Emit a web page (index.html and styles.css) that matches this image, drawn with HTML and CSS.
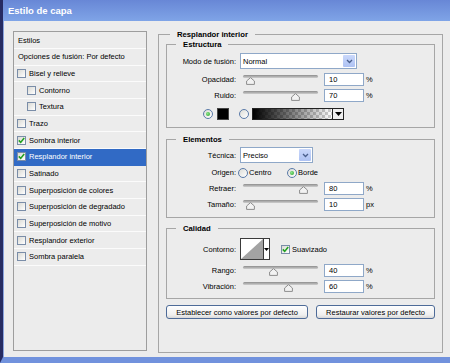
FILE: index.html
```html
<!DOCTYPE html>
<html lang="es">
  <head>
    <meta charset="UTF-8" />
    <meta name="viewport" content="width=device-width, initial-scale=1.0" />
    <title>Estilo de capa</title>
    <link rel="stylesheet" href="styles.css">
  </head>

  <body>
    <div class="window">
      <div class="titlebar">Estilo de capa</div>

      <div class="content">
        <ul class="styles-list">
          <li class="list-head first">Estilos</li>
          <li class="list-head">Opciones de fusión: Por defecto</li>
          <li><span class="check"></span>Bisel y relieve</li>
          <li class="sub"><span class="check"></span>Contorno</li>
          <li class="sub"><span class="check"></span>Textura</li>
          <li><span class="check"></span>Trazo</li>
          <li>
            <span class="check"><svg width="7" height="7" viewBox="0 0 7 7"><path d="M0.8 3.4 L2.7 5.4 L6.2 1" fill="none" stroke="#21a121" stroke-width="1.6"/></svg></span>Sombra interior
          </li>
          <li class="selected">
            <span class="check"><svg width="7" height="7" viewBox="0 0 7 7"><path d="M0.8 3.4 L2.7 5.4 L6.2 1" fill="none" stroke="#21a121" stroke-width="1.6"/></svg></span>Resplandor interior
          </li>
          <li><span class="check"></span>Satinado</li>
          <li><span class="check"></span>Superposición de colores</li>
          <li><span class="check"></span>Superposición de degradado</li>
          <li><span class="check"></span>Superposición de motivo</li>
          <li><span class="check"></span>Resplandor exterior</li>
          <li><span class="check"></span>Sombra paralela</li>
        </ul>

        <fieldset class="group outer">
          <legend>Resplandor interior</legend>

          <fieldset class="group estructura">
            <legend>Estructura</legend>
            <div class="row row-select">
              <span class="label">Modo de fusión:</span>
              <div class="select select-wide">
                <span class="select-text">Normal</span>
                <span class="select-btn"><svg width="7" height="5" viewBox="0 0 7 5"><path d="M1 1 L3.5 3.5 L6 1" fill="none" stroke="#4a5f8c" stroke-width="1.3"/></svg></span>
              </div>
            </div>
            <div class="row gap4">
              <span class="label">Opacidad:</span>
              <div class="slider">
                <div class="track"></div>
                <svg class="thumb" style="left: 10%" width="9" height="8" viewBox="0 0 9 8"><path d="M4.5 0.6 L8.4 4 V7.4 H0.6 V4 Z" fill="#f2f2f2" stroke="#8c8c8c"/></svg>
              </div>
              <div class="field">10</div>
              <span class="unit">%</span>
            </div>
            <div class="row gap3">
              <span class="label">Ruido:</span>
              <div class="slider">
                <div class="track"></div>
                <svg class="thumb" style="left: 70%" width="9" height="8" viewBox="0 0 9 8"><path d="M4.5 0.6 L8.4 4 V7.4 H0.6 V4 Z" fill="#f2f2f2" stroke="#8c8c8c"/></svg>
              </div>
              <div class="field">70</div>
              <span class="unit">%</span>
            </div>
            <div class="row row-color gap6">
              <span class="radio on"></span>
              <span class="swatch"></span>
              <span class="radio radio-gap"></span>
              <div class="gradient">
                <span class="gradient-fill"></span>
                <span class="gradient-btn"><svg width="7" height="4" viewBox="0 0 7 4"><path d="M0 0 H7 L3.5 4 Z" fill="#000"/></svg></span>
              </div>
            </div>
          </fieldset>

          <fieldset class="group elementos">
            <legend>Elementos</legend>
            <div class="row row-select">
              <span class="label">Técnica:</span>
              <div class="select select-short">
                <span class="select-text">Preciso</span>
                <span class="select-btn"><svg width="7" height="5" viewBox="0 0 7 5"><path d="M1 1 L3.5 3.5 L6 1" fill="none" stroke="#4a5f8c" stroke-width="1.3"/></svg></span>
              </div>
            </div>
            <div class="row row-origin gap4">
              <span class="label">Origen:</span>
              <span class="option option-first"><span class="radio"></span>Centro</span>
              <span class="option"><span class="radio on"></span>Borde</span>
            </div>
            <div class="row gap4">
              <span class="label">Retraer:</span>
              <div class="slider">
                <div class="track"></div>
                <svg class="thumb" style="left: 80%" width="9" height="8" viewBox="0 0 9 8"><path d="M4.5 0.6 L8.4 4 V7.4 H0.6 V4 Z" fill="#f2f2f2" stroke="#8c8c8c"/></svg>
              </div>
              <div class="field">80</div>
              <span class="unit">%</span>
            </div>
            <div class="row gap3">
              <span class="label">Tamaño:</span>
              <div class="slider">
                <div class="track"></div>
                <svg class="thumb" style="left: 10%" width="9" height="8" viewBox="0 0 9 8"><path d="M4.5 0.6 L8.4 4 V7.4 H0.6 V4 Z" fill="#f2f2f2" stroke="#8c8c8c"/></svg>
              </div>
              <div class="field">10</div>
              <span class="unit">px</span>
            </div>
          </fieldset>

          <fieldset class="group calidad">
            <legend>Calidad</legend>
            <div class="row row-contour">
              <span class="label">Contorno:</span>
              <div class="contour">
                <svg class="contour-preview" width="22" height="20" viewBox="0 0 22 20"><polygon points="0,20 22,0 22,20" fill="#a3a3a3"/></svg>
                <span class="contour-btn"><svg width="5" height="3" viewBox="0 0 5 3"><path d="M0 0 H5 L2.5 3 Z" fill="#000"/></svg></span>
              </div>
              <span class="check check-smooth"><svg width="7" height="7" viewBox="0 0 7 7"><path d="M0.8 3.4 L2.7 5.4 L6.2 1" fill="none" stroke="#21a121" stroke-width="1.6"/></svg></span>
              <span>Suavizado</span>
            </div>
            <div class="row gap4">
              <span class="label">Rango:</span>
              <div class="slider">
                <div class="track"></div>
                <svg class="thumb" style="left: 40%" width="9" height="8" viewBox="0 0 9 8"><path d="M4.5 0.6 L8.4 4 V7.4 H0.6 V4 Z" fill="#f2f2f2" stroke="#8c8c8c"/></svg>
              </div>
              <div class="field">40</div>
              <span class="unit">%</span>
            </div>
            <div class="row gap3">
              <span class="label">Vibración:</span>
              <div class="slider">
                <div class="track"></div>
                <svg class="thumb" style="left: 60%" width="9" height="8" viewBox="0 0 9 8"><path d="M4.5 0.6 L8.4 4 V7.4 H0.6 V4 Z" fill="#f2f2f2" stroke="#8c8c8c"/></svg>
              </div>
              <div class="field">60</div>
              <span class="unit">%</span>
            </div>
          </fieldset>

          <div class="buttons">
            <button class="btn btn-set">Establecer como valores por defecto</button>
            <button class="btn btn-reset">Restaurar valores por defecto</button>
          </div>
        </fieldset>
      </div>
    </div>
  </body>
</html>
```

FILE: styles.css
```css
* {
  box-sizing: border-box;
}

body {
  margin: 0;
  font-family: "Liberation Sans", Arial, sans-serif;
  font-size: 7.5px;
  color: #000;
  background-color: #ececec;
}

.window {
  width: 450px;
  height: 363px;
  display: flex;
  flex-direction: column;
  background-color: #ececec;
  border-left: 3px solid #262b62;
  border-bottom: 6px solid #7192dd;
  box-shadow: inset 1px 0 0 #8aa3de;
  overflow: hidden;
}

.titlebar {
  height: 21px;
  line-height: 22px;
  padding-left: 5px;
  color: #fff;
  font-size: 9.5px;
  font-weight: bold;
  background: linear-gradient(#6887d6, #7fa4e7);
  flex-shrink: 0;
}

.content {
  display: flex;
  align-items: flex-start;
  gap: 11px;
  padding: 10px 7px 0 10px;
}

/* left list */

.styles-list {
  width: 134px;
  height: 320px;
  margin: 0;
  padding: 0;
  list-style: none;
  border: 1px solid #9d9d9d;
  flex-shrink: 0;
}

.styles-list li {
  height: 16.67px;
  display: flex;
  align-items: center;
  padding-left: 3px;
  border-bottom: 1px solid #fbfbfb;
}

.styles-list .list-head {
  padding-left: 4px;
}

.styles-list .first {
  height: 17px;
}

.styles-list .sub {
  padding-left: 13px;
}

.styles-list .selected {
  background-color: #316ac5;
  color: #fff;
  border-bottom-color: #316ac5;
}

.check {
  width: 9px;
  height: 9px;
  margin-right: 3px;
  display: inline-flex;
  align-items: center;
  justify-content: center;
  border: 1px solid #7a8da8;
  background: linear-gradient(135deg, #d9d9d4, #ffffff);
  flex-shrink: 0;
}

/* groups */

.group {
  margin: 0;
  padding: 0;
  min-width: 0;
  border: 1px solid #a6a6a6;
}

.group legend {
  font-size: 7.7px;
  font-weight: bold;
  line-height: 9px;
  padding: 0 7px;
  margin-left: 9px;
}

.outer {
  width: 285px;
  margin-top: -1px;
  padding: 1px 7px 33px;
}

.outer > legend {
  margin-left: 4px;
}

.estructura {
  padding: 4px 0 7px;
}

.elementos {
  margin-top: 7px;
  padding: 3px 0 6px;
}

.calidad {
  margin-top: 6px;
  padding: 5px 0 5px;
}

.row {
  height: 13px;
  display: flex;
  align-items: center;
}

.gap3 {
  margin-top: 3px;
}

.gap4 {
  margin-top: 4px;
}

.gap6 {
  margin-top: 6px;
}

.label {
  width: 69px;
  margin-right: 4px;
  text-align: right;
  flex-shrink: 0;
}

/* select */

.row-select {
  height: 16px;
}

.select {
  height: 16px;
  display: flex;
  align-items: stretch;
  border: 1px solid #8fa8c8;
  background-color: #fff;
}

.select-wide {
  width: 117px;
}

.select-short {
  width: 73px;
}

.select-text {
  flex: 1;
  padding-left: 2px;
  display: flex;
  align-items: center;
}

.select-btn {
  width: 12px;
  margin: 1px;
  display: flex;
  align-items: center;
  justify-content: center;
  border-radius: 1px;
  background: linear-gradient(#cad8fb, #aec2f3);
}

/* sliders */

.slider {
  position: relative;
  width: 75px;
  height: 13px;
  margin-left: 3px;
}

.track {
  margin-top: 2px;
  height: 3px;
  border-radius: 2px;
  background: linear-gradient(#8d8d8d, #cfcfcf);
}

.thumb {
  position: absolute;
  top: 4px;
  margin-left: -4.5px;
}

.field {
  width: 40px;
  height: 13px;
  margin-left: 6px;
  padding-left: 4px;
  display: flex;
  align-items: center;
  border: 1px solid #8fa8c8;
  background-color: #fff;
}

.unit {
  margin-left: 2px;
}

/* colour row */

.row-color {
  height: 12px;
}

.radio {
  width: 10px;
  height: 10px;
  display: inline-flex;
  align-items: center;
  justify-content: center;
  border-radius: 50%;
  border: 1px solid #5a7aa8;
  background: linear-gradient(135deg, #dcdcd6, #ffffff);
  flex-shrink: 0;
}

.radio.on::after {
  content: "";
  width: 4px;
  height: 4px;
  border-radius: 50%;
  background: radial-gradient(circle at 40% 40%, #8ee68e, #1f9e1f);
}

.row-color .radio:first-child {
  margin-left: 36px;
}

.swatch {
  width: 12px;
  height: 12px;
  margin-left: 4px;
  background-color: #000;
  border: 1px solid #444;
}

.radio-gap {
  margin-left: 10px;
}

.gradient {
  width: 92px;
  height: 12px;
  margin-left: 3px;
  display: flex;
  border: 1px solid #222;
}

.gradient-fill {
  flex: 1;
  background:
    linear-gradient(to right, #000, rgba(0, 0, 0, 0)),
    repeating-conic-gradient(#cfcfcf 0 25%, #ffffff 0 50%) 0 0 / 6px 6px;
}

.gradient-btn {
  width: 11px;
  display: flex;
  align-items: center;
  justify-content: center;
  border-left: 1px solid #222;
  background-color: #efefef;
}

/* origin radios */

.row-origin {
  height: 11px;
}

.option {
  display: inline-flex;
  align-items: center;
  gap: 1px;
}

.option-first {
  width: 49px;
  margin-left: -2px;
}

/* contour */

.row-contour {
  height: 22px;
}

.contour {
  width: 30px;
  height: 22px;
  display: flex;
  border: 1px solid #3a3a3a;
  background-color: #fff;
}

.contour-preview {
  display: block;
}

.contour-btn {
  flex: 1;
  display: flex;
  align-items: center;
  justify-content: center;
  border-left: 1px solid #3a3a3a;
  background-color: #fff;
}

.check-smooth {
  margin-left: 11px;
  margin-right: 2px;
}

/* buttons */

.buttons {
  display: flex;
  justify-content: space-between;
  margin-top: 6px;
}

.btn {
  height: 14px;
  padding: 0;
  font-family: inherit;
  font-size: 7.5px;
  color: #000;
  border: 1px solid #4e6b98;
  border-radius: 3px;
  background: linear-gradient(#fefefe, #efefef 75%, #d8d8d8);
}

.btn-set {
  width: 142px;
}

.btn-reset {
  width: 119px;
}
```
